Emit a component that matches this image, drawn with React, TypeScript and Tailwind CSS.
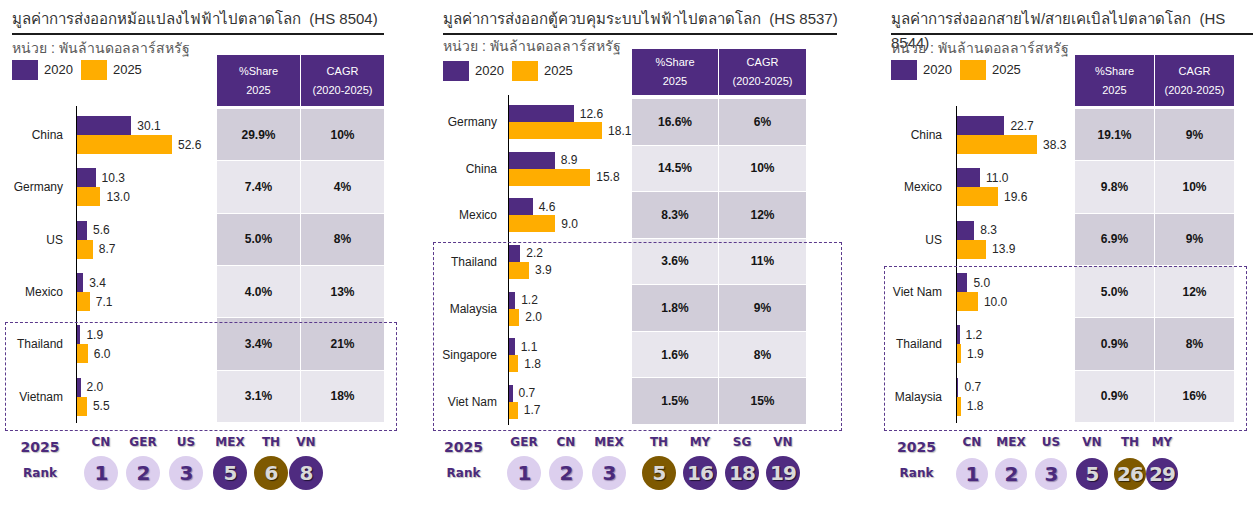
import React from "react";

type Row = { name: string; a: number; b: number; share: string; cagr: string };
type Rank = { code: string; n: string; kind: "light" | "dark" | "gold"; ml: string };
type Cfg = {
  title: React.ReactNode;
  panelCls: string;
  topCls: string;
  unitCls: string;
  legendCls: string;
  headerCls: string;
  col1: string;
  col2: string;
  tableWrapCls: string;
  stubCls: string;
  labelCls: string;
  axisCls: string;
  rowCls: string;
  cellCls: string;
  barCls: string;
  scale: number;
  rows: Row[];
  boxCls: string;
  rankCls: string;
  rankLeftCls: string;
  itemCls: string;
  circleCls: string;
  ranks: Rank[];
};

const panels: Cfg[] = [
  {
    title: <>มูลค่าการส่งออกหม้อแปลงไฟฟ้าไปตลาดโลก{"\u00a0\u00a0"}(HS 8504)</>,
    panelCls: "w-[372px]",
    topCls: "h-[71px]",
    unitCls: "mt-[4px]",
    legendCls: "mt-[3px]",
    headerCls: "mt-[20px] h-[51px]",
    col1: "w-[83px]",
    col2: "w-[83px]",
    tableWrapCls: "mr-0",
    stubCls: "h-[3px]",
    labelCls: "w-[51px]",
    axisCls: "ml-[13px]",
    rowCls: "h-[52.33px]",
    cellCls: "h-[51.33px]",
    barCls: "h-[19px]",
    scale: 1.806,
    rows: [
      { name: "China", a: 30.1, b: 52.6, share: "29.9%", cagr: "10%" },
      { name: "Germany", a: 10.3, b: 13.0, share: "7.4%", cagr: "4%" },
      { name: "US", a: 5.6, b: 8.7, share: "5.0%", cagr: "8%" },
      { name: "Mexico", a: 3.4, b: 7.1, share: "4.0%", cagr: "13%" },
      { name: "Thailand", a: 1.9, b: 6.0, share: "3.4%", cagr: "21%" },
      { name: "Vietnam", a: 2.0, b: 5.5, share: "3.1%", cagr: "18%" },
    ],
    boxCls: "left-[-7px] top-[322px] w-[392px] h-[109px]",
    rankCls: "mt-[11px]",
    rankLeftCls: "w-[56px]",
    itemCls: "w-[34px]",
    circleCls: "w-[34px] h-[34px] mt-[6px]",
    ranks: [
      { code: "CN", n: "1", kind: "light", ml: "ml-[16px]" },
      { code: "GER", n: "2", kind: "light", ml: "ml-[8px]" },
      { code: "US", n: "3", kind: "light", ml: "ml-[9px]" },
      { code: "MEX", n: "5", kind: "dark", ml: "ml-[10px]" },
      { code: "TH", n: "6", kind: "gold", ml: "ml-[7px]" },
      { code: "VN", n: "8", kind: "dark", ml: "ml-[1px]" },
    ],
  },
  {
    title: <>มูลค่าการส่งออกตู้ควบคุมระบบไฟฟ้าไปตลาดโลก{"\u00a0\u00a0"}(HS 8537)</>,
    panelCls: "w-[394px] ml-[59px]",
    topCls: "h-[60px]",
    unitCls: "mt-[2px]",
    legendCls: "mt-[6px]",
    headerCls: "mt-[14px] h-[46px]",
    col1: "w-[86px]",
    col2: "w-[87px]",
    tableWrapCls: "mr-[31px]",
    stubCls: "h-[4px]",
    labelCls: "w-[54px]",
    axisCls: "ml-[11px]",
    rowCls: "h-[46.57px]",
    cellCls: "h-[45.57px]",
    barCls: "h-[17px]",
    scale: 5.14,
    rows: [
      { name: "Germany", a: 12.6, b: 18.1, share: "16.6%", cagr: "6%" },
      { name: "China", a: 8.9, b: 15.8, share: "14.5%", cagr: "10%" },
      { name: "Mexico", a: 4.6, b: 9.0, share: "8.3%", cagr: "12%" },
      { name: "Thailand", a: 2.2, b: 3.9, share: "3.6%", cagr: "11%" },
      { name: "Malaysia", a: 1.2, b: 2.0, share: "1.8%", cagr: "9%" },
      { name: "Singapore", a: 1.1, b: 1.8, share: "1.6%", cagr: "8%" },
      { name: "Viet Nam", a: 0.7, b: 1.7, share: "1.5%", cagr: "15%" },
    ],
    boxCls: "left-[-10px] top-[242px] w-[409px] h-[189px]",
    rankCls: "mt-[9px]",
    rankLeftCls: "w-[41px]",
    itemCls: "w-[34px]",
    circleCls: "w-[34px] h-[34px] mt-[6px]",
    ranks: [
      { code: "GER", n: "1", kind: "light", ml: "ml-[23px]" },
      { code: "CN", n: "2", kind: "light", ml: "ml-[8px]" },
      { code: "MEX", n: "3", kind: "light", ml: "ml-[9px]" },
      { code: "TH", n: "5", kind: "gold", ml: "ml-[16px]" },
      { code: "MY", n: "16", kind: "dark", ml: "ml-[7px]" },
      { code: "SG", n: "18", kind: "dark", ml: "ml-[8px]" },
      { code: "VN", n: "19", kind: "dark", ml: "ml-[7px]" },
    ],
  },
  {
    title: (
      <>
        มูลค่าการส่งออกสายไฟ/สายเคเบิลไปตลาดโลก{"\u00a0\u00a0"}(HS
        <br />
        8544)
      </>
    ),
    panelCls: "w-[362px] ml-[54px]",
    topCls: "h-[71px]",
    unitCls: "mt-[4px]",
    legendCls: "mt-[3px]",
    headerCls: "mt-[20px] h-[51px]",
    col1: "w-[79px]",
    col2: "w-[79px]",
    tableWrapCls: "mr-[19px]",
    stubCls: "h-[3px]",
    labelCls: "w-[51px]",
    axisCls: "ml-[14px]",
    rowCls: "h-[52.33px]",
    cellCls: "h-[51.33px]",
    barCls: "h-[19px]",
    scale: 2.09,
    rows: [
      { name: "China", a: 22.7, b: 38.3, share: "19.1%", cagr: "9%" },
      { name: "Mexico", a: 11.0, b: 19.6, share: "9.8%", cagr: "10%" },
      { name: "US", a: 8.3, b: 13.9, share: "6.9%", cagr: "9%" },
      { name: "Viet Nam", a: 5.0, b: 10.0, share: "5.0%", cagr: "12%" },
      { name: "Thailand", a: 1.2, b: 1.9, share: "0.9%", cagr: "8%" },
      { name: "Malaysia", a: 0.7, b: 1.8, share: "0.9%", cagr: "16%" },
    ],
    boxCls: "left-[-7px] top-[266px] w-[363px] h-[165px]",
    rankCls: "mt-[11px]",
    rankLeftCls: "w-[51px]",
    itemCls: "w-[32px]",
    circleCls: "w-[32px] h-[32px] mt-[8px]",
    ranks: [
      { code: "CN", n: "1", kind: "light", ml: "ml-[14px]" },
      { code: "MEX", n: "2", kind: "light", ml: "ml-[7px]" },
      { code: "US", n: "3", kind: "light", ml: "ml-[8px]" },
      { code: "VN", n: "5", kind: "dark", ml: "ml-[9px]" },
      { code: "TH", n: "26", kind: "gold", ml: "ml-[6px]" },
      { code: "MY", n: "29", kind: "dark", ml: "ml-0" },
    ],
  },
];

const heavy = "font-['DejaVu_Sans','Liberation_Sans',sans-serif] font-bold";

function Circle({ r, cls }: { r: Rank; cls: string }) {
  const kindCls =
    r.kind === "light"
      ? "bg-[#dccfee] text-[#4b2a7c] [text-shadow:1px_1px_1px_rgba(60,40,90,0.45)]"
      : r.kind === "gold"
      ? "bg-[#7e5900] text-[#d9d9d9] [text-shadow:1px_1px_1px_rgba(0,0,0,0.6)]"
      : "bg-[#4f2b80] text-[#d9d9d9] [text-shadow:1px_1px_1px_rgba(0,0,0,0.6)]";
  return (
    <div className={`${cls} ${kindCls} rounded-full flex items-center justify-center`}>
      <span className={`${heavy} text-[20px] leading-none tracking-[-1px]`}>{r.n}</span>
    </div>
  );
}

function Panel({ c }: { c: Cfg }) {
  return (
    <div className={`${c.panelCls} relative flex flex-col shrink-0`}>
      <div className="h-[35px] border-b-2 border-[#1c1c1c] pt-[7px] text-[15px] leading-[24px] text-[#333] whitespace-nowrap">
        {c.title}
      </div>
      <div className={`${c.topCls} flex`}>
        <div className="flex-1 flex flex-col">
          <div className={`${c.unitCls} text-[14px] leading-[18px] text-[#595959] whitespace-nowrap`}>
            หน่วย : พันล้านดอลลาร์สหรัฐ
          </div>
          <div className={`${c.legendCls} flex items-center text-[13px] text-[#262626]`}>
            <div className="w-[26px] h-[20px] bg-[#4f2b80]" />
            <span className="ml-[6px]">2020</span>
            <div className="w-[26px] h-[20px] bg-[#ffad00] ml-[8px]" />
            <span className="ml-[6px]">2025</span>
          </div>
        </div>
        <div className={`${c.tableWrapCls} ${c.headerCls} flex gap-[1px]`}>
          <div className={`${c.col1} h-full bg-[#4f2b80] text-white text-[11px] leading-[19px] flex flex-col items-center justify-center`}>
            <span>%Share</span>
            <span>2025</span>
          </div>
          <div className={`${c.col2} h-full bg-[#4f2b80] text-white text-[11px] leading-[19px] flex flex-col items-center justify-center`}>
            <span>CAGR</span>
            <span>(2020-2025)</span>
          </div>
        </div>
      </div>
      <div className={`${c.stubCls} flex`}>
        <div className={c.labelCls} />
        <div className={`${c.axisCls} border-l-[1.5px] border-black`} />
      </div>
      {c.rows.map((r, i) => {
        const bg = i % 2 === 0 ? "bg-[#d1cdd9]" : "bg-[#e8e6ed]";
        return (
          <div key={r.name} className={`${c.rowCls} flex`}>
            <div className={`${c.labelCls} flex items-center justify-end text-[12px] text-[#222] whitespace-nowrap`}>
              {r.name}
            </div>
            <div className={`${c.axisCls} flex-1 border-l-[1.5px] border-black flex flex-col justify-center text-[12px] text-[#262626]`}>
              <div className={`${c.barCls} flex items-center`}>
                <div className="h-full bg-[#4f2b80]" style={{ width: r.a * c.scale }} />
                <span className="ml-[6px] leading-none">{r.a.toFixed(1)}</span>
              </div>
              <div className={`${c.barCls} flex items-center`}>
                <div className="h-full bg-[#ffad00]" style={{ width: r.b * c.scale }} />
                <span className="ml-[6px] leading-none">{r.b.toFixed(1)}</span>
              </div>
            </div>
            <div className={`${c.tableWrapCls} flex gap-[1px]`}>
              <div className={`${c.col1} ${c.cellCls} ${bg} flex items-center justify-center text-[12px] font-bold text-[#141414]`}>
                {r.share}
              </div>
              <div className={`${c.col2} ${c.cellCls} ${bg} flex items-center justify-center text-[12px] font-bold text-[#141414]`}>
                {r.cagr}
              </div>
            </div>
          </div>
        );
      })}
      <div className={`${c.rankCls} flex items-start`}>
        <div className={`${c.rankLeftCls} flex flex-col items-center text-[#4b2a7c] [text-shadow:1px_1px_1px_rgba(0,0,0,0.25)] ${heavy}`}>
          <span className="mt-[3px] text-[14px] leading-[20px]">2025</span>
          <span className="mt-[7px] text-[12px] leading-[18px]">Rank</span>
        </div>
        {c.ranks.map((r) => (
          <div key={r.code} className={`${c.itemCls} ${r.ml} flex flex-col items-center shrink-0`}>
            <span className={`${heavy} text-[12px] leading-[16px] text-[#4b2a7c] whitespace-nowrap [text-shadow:1px_1px_1px_rgba(0,0,0,0.25)]`}>
              {r.code}
            </span>
            <Circle r={r} cls={c.circleCls} />
          </div>
        ))}
      </div>
      <div className={`absolute ${c.boxCls} border border-dashed border-[#5b3a8c] pointer-events-none`} />
    </div>
  );
}

export default function App() {
  return (
    <div className="w-[1254px] h-[515px] bg-white overflow-hidden flex pl-[12px] font-['Liberation_Sans','Noto_Sans',sans-serif]">
      {panels.map((c, i) => (
        <Panel key={i} c={c} />
      ))}
    </div>
  );
}
